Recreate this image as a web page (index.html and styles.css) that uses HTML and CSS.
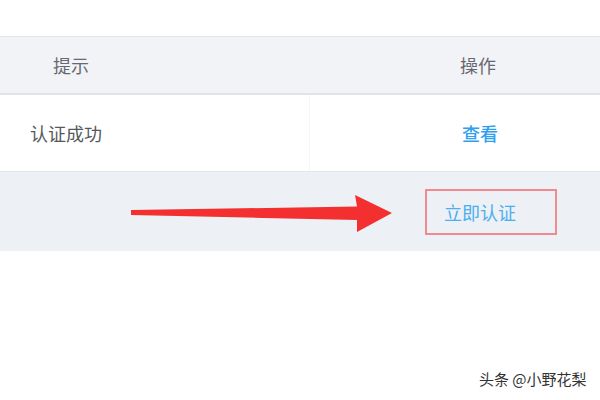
FILE: index.html
```html
<!DOCTYPE html>
<html lang="zh-CN">
<head>
<meta charset="utf-8">
<link rel="stylesheet" href="styles.css">
</head>
<body>
<div class="page">
  <div class="table">
    <div class="row head">
      <div class="cell c1">提示</div>
      <div class="cell c2">操作</div>
    </div>
    <div class="row body">
      <div class="cell c1 divider">认证成功</div>
      <div class="cell c2"><span class="link">查看</span></div>
    </div>
    <div class="row alt">
      <div class="cell c1"></div>
      <div class="cell c2"><span class="btn">立即认证</span></div>
    </div>
  </div>
  <svg class="arrow" width="600" height="400" viewBox="0 0 600 400">
    <polygon points="131,210 357,206.5 355,195 392,213 357,232 357,220 131,215" fill="#f3302f"/>
  </svg>
  <div class="mark">头条 @小野花梨</div>
</div>
</body>
</html>
```

FILE: styles.css
```css
html, body {
  margin: 0;
  padding: 0;
  background: #ffffff;
}
.page {
  position: relative;
  width: 600px;
  height: 400px;
  overflow: hidden;
  font-family: "Noto Sans CJK SC", "Noto Sans", sans-serif;
}
.table {
  padding-top: 36px;
}
.row {
  display: grid;
  grid-template-columns: 310px 1fr;
}
.head {
  height: 56px;
  background: #f2f3f7;
  border-top: 1px solid #e3e6e9;
  border-bottom: 2px solid #e1e3e7;
  color: #666a70;
}
.body {
  height: 76px;
  background: #ffffff;
  border-bottom: 1px solid #e4e7ea;
  color: #55585c;
}
.alt {
  height: 79px;
  background: #edf0f4;
}
.cell {
  display: flex;
  align-items: center;
  font-size: 18px;
}
.head .c1 { padding-left: 53px; }
.head .c2 { padding-left: 150px; }
.body .c1 { padding-left: 30px; }
.body .c2 { padding-left: 152px; }
.divider { border-right: 1px solid #f4f5f7; }
.link {
  color: #2fa0f0;
  font-weight: 500;
}
.alt .c2 { padding-left: 115px; }
.btn {
  display: flex;
  align-items: center;
  box-sizing: border-box;
  width: 132px;
  height: 46px;
  padding-left: 17px;
  border: 2px solid #f08a8e;
  color: #4aaef0;
  font-size: 18px;
}
.arrow {
  position: absolute;
  left: 0;
  top: 0;
  filter: blur(0.6px);
}
.mark {
  position: absolute;
  left: 479px;
  top: 368px;
  font-size: 15px;
  color: #333333;
  text-shadow: 0 0 2px #ffffff;
}
```
